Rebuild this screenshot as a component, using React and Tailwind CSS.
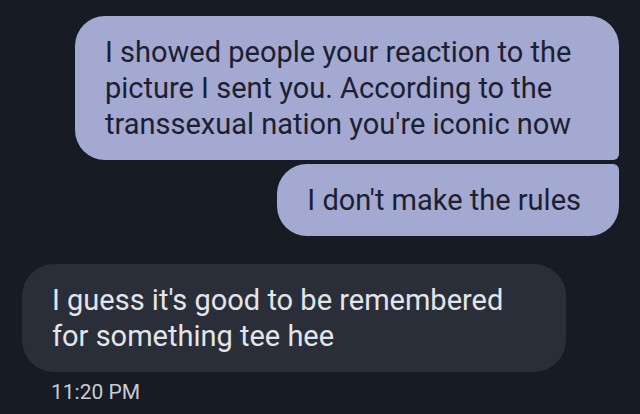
export default function App() {
  return (
    <div
      className="min-h-screen w-full bg-[#171b23] pt-4 pb-4"
      style={{ fontFamily: "Roboto, 'Noto Sans', sans-serif" }}
    >
      <div className="flex flex-col">
        <div className="flex flex-col items-end gap-1 pr-[21px]">
          <div className="max-w-[544px] rounded-[30px] rounded-br-[6px] bg-[#a3a9d0] px-[30px] py-[18px] text-[29px] leading-[36px] text-[#1c2030]">
            I showed people your reaction to the picture I sent you. According to the transsexual nation you're iconic now
          </div>
          <div className="max-w-[544px] rounded-[30px] rounded-tr-[6px] bg-[#a3a9d0] pl-[30px] pr-[38px] py-[18px] text-[29px] leading-[36px] text-[#1c2030]">
            I don't make the rules
          </div>
        </div>
        <div className="mt-[28px] flex flex-col items-start pl-[22px]">
          <div className="max-w-[544px] rounded-[32px] bg-[#2a2e38] px-[30px] py-[18px] text-[29px] leading-[36px] text-[#e3e5eb]">
            I guess it's good to be remembered for something tee hee
          </div>
          <div className="mt-[6px] pl-[29px] text-[21px] leading-[28px] text-[#c8cbd3]">
            11:20 PM
          </div>
        </div>
      </div>
    </div>
  );
}
